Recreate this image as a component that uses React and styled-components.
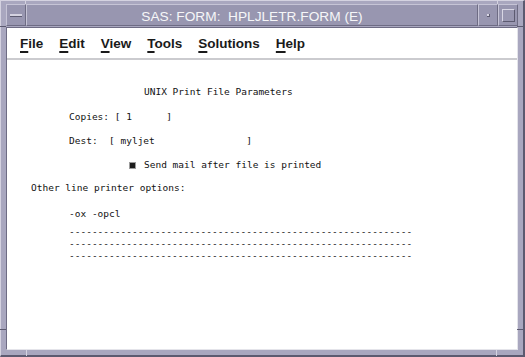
import React from "react";
import styled, { createGlobalStyle } from "styled-components";

const Global = createGlobalStyle`
  html, body { margin: 0; padding: 0; background: #ffffff; }
  body { width: 525px; height: 357px; overflow: hidden; }
`;

const Window = styled.div`
  position: relative;
  width: 525px;
  height: 357px;
  box-sizing: border-box;
  background: #a9a7bf;
  border-top: 1px solid #d4d2e0;
  border-left: 1px solid #d4d2e0;
  border-right: 2px solid #5c5a70;
  border-bottom: 2px solid #5c5a70;
  padding: 3px 5px 5px 5px;
  display: flex;
  flex-direction: column;
  gap: 1px;
`;

const Notch = styled.div`
  position: absolute;
  background: ${(p) => p.$color};
  width: ${(p) => p.$w}px;
  height: ${(p) => p.$h}px;
  left: ${(p) => p.$x}px;
  top: ${(p) => p.$y}px;
`;

const TitleBar = styled.div`
  height: 22px;
  display: flex;
  background: #9896b0;
`;

const Bevel = styled.div`
  box-sizing: border-box;
  border-top: 1px solid #c6c4d6;
  border-left: 1px solid #c6c4d6;
  border-right: 1px solid #6e6c84;
  border-bottom: 1px solid #6e6c84;
  display: flex;
  align-items: center;
  justify-content: center;
`;

const TitleButton = styled(Bevel)`
  width: ${(p) => p.$w || 20}px;
  flex: none;
`;

const TitleText = styled(Bevel)`
  flex: 1;
  color: #f6f6f8;
  font-family: "Liberation Sans", Arial, sans-serif;
  font-size: 13.7px;
  padding-top: 2px;
  white-space: pre;
`;

const MenuGlyph = styled.div`
  width: 12px;
  height: 2px;
  background: #d4d2e0;
  border-bottom: 1px solid #5c5a70;
`;

const MinGlyph = styled.div`
  width: 2px;
  height: 2px;
  background: #d8d6e4;
  border-right: 1px solid #5c5a70;
  border-bottom: 1px solid #5c5a70;
`;

const MaxGlyph = styled.div`
  box-sizing: border-box;
  width: 13px;
  height: 13px;
  border-top: 1px solid #d8d6e4;
  border-left: 1px solid #d8d6e4;
  border-right: 1px solid #5c5a70;
  border-bottom: 1px solid #5c5a70;
`;

const Client = styled.div`
  flex: 1;
  display: flex;
  flex-direction: column;
  background: #ffffff;
  border-top: 1px solid #6e6c84;
  border-left: 1px solid #6e6c84;
  border-right: 1px solid #e4e4ea;
  border-bottom: 1px solid #e4e4ea;
`;

const MenuBar = styled.div`
  height: 30px;
  flex: none;
  display: flex;
  align-items: center;
  gap: 16px;
  padding-left: 13px;
  border-bottom: 2px solid #cbcbcf;
  font-family: "Liberation Sans", Arial, sans-serif;
  font-weight: bold;
  font-size: 13.5px;
  color: #1a1a1a;
`;

const MenuItem = styled.span`
  padding-top: 1px;
`;

const Mnemonic = styled.span`
  text-decoration: underline;
  text-underline-offset: 3px;
  text-decoration-thickness: 1.5px;
`;

const Form = styled.div`
  flex: 1;
  display: flex;
  flex-direction: column;
  font-family: "DejaVu Sans Mono", "Liberation Mono", monospace;
  font-size: 9.5px;
  color: #111111;
`;

const Line = styled.div`
  height: 12px;
  line-height: 12px;
  white-space: pre;
  margin-top: ${(p) => p.$top || 0}px;
  padding-left: ${(p) => p.$indent}px;
  display: flex;
  align-items: center;
`;

const Check = styled.span`
  box-sizing: border-box;
  width: 7px;
  height: 7px;
  border: 1px solid #9c9c9c;
  background: #1c1c1c;
  margin-right: 8px;
`;

const menus = ["File", "Edit", "View", "Tools", "Solutions", "Help"];
const dashes = "-".repeat(60);

export default function App() {
  return (
    <>
      <Global />
      <Window>
        <Notch $x={24} $y={-1} $w={1} $h={4} $color="#d4d2e0" />
        <Notch $x={496} $y={-1} $w={1} $h={4} $color="#d4d2e0" />
        <Notch $x={-1} $y={25} $w={6} $h={1} $color="#5c5a70" />
        <Notch $x={516} $y={25} $w={6} $h={1} $color="#5c5a70" />
        <Notch $x={-1} $y={328} $w={6} $h={1} $color="#5c5a70" />
        <Notch $x={516} $y={328} $w={6} $h={1} $color="#5c5a70" />
        <Notch $x={25} $y={349} $w={1} $h={6} $color="#d4d2e0" />
        <Notch $x={495} $y={349} $w={1} $h={6} $color="#d4d2e0" />
        <TitleBar>
          <TitleButton $w={20}>
            <MenuGlyph />
          </TitleButton>
          <TitleText>SAS: FORM:  HPLJLETR.FORM (E)</TitleText>
          <TitleButton $w={20}>
            <MinGlyph />
          </TitleButton>
          <TitleButton $w={20}>
            <MaxGlyph />
          </TitleButton>
        </TitleBar>
        <Client>
          <MenuBar>
            {menus.map((m) => (
              <MenuItem key={m}>
                <Mnemonic>{m[0]}</Mnemonic>
                {m.slice(1)}
              </MenuItem>
            ))}
          </MenuBar>
          <Form>
            <Line $top={26} $indent={137}>UNIX Print File Parameters</Line>
            <Line $top={13} $indent={62}>{"Copies: [ 1      ]"}</Line>
            <Line $top={12} $indent={62}>{"Dest:  [ myljet                ]"}</Line>
            <Line $top={12} $indent={122}>
              <Check />
              Send mail after file is printed
            </Line>
            <Line $top={11} $indent={24}>Other line printer options:</Line>
            <Line $top={14} $indent={62}>-ox -opcl</Line>
            <Line $top={6} $indent={62}>{dashes}</Line>
            <Line $indent={62}>{dashes}</Line>
            <Line $indent={62}>{dashes}</Line>
          </Form>
        </Client>
      </Window>
    </>
  );
}
